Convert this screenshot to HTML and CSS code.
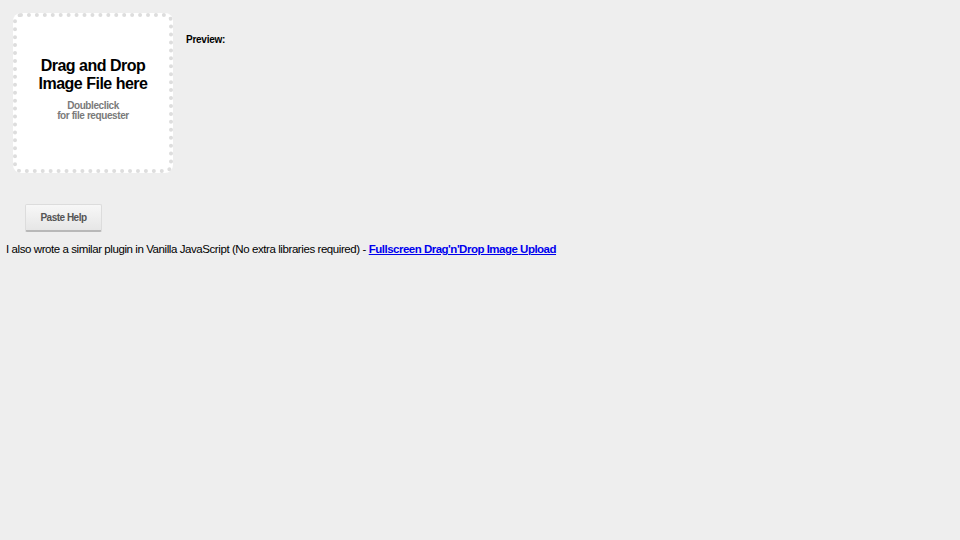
FILE: index.html
```html
<!DOCTYPE html>
<html>
<head>
<meta charset="utf-8">
<link rel="stylesheet" href="styles.css">
</head>
<body>
<div class="top">
  <div class="drop">
    <div class="drop-title">Drag and Drop<br>Image File here</div>
    <div class="drop-sub">Doubleclick<br>for file requester</div>
  </div>
  <div class="preview">Preview:</div>
</div>
<div class="actions">
  <button class="btn">Paste Help</button>
</div>
<p class="note">I also wrote a similar plugin in Vanilla JavaScript (No extra libraries required) - <a href="#">Fullscreen Drag'n'Drop Image Upload</a></p>
</body>
</html>
```
FILE: styles.css
```css
html, body {
  margin: 0;
  padding: 0;
  background: #eeeeee;
  font-family: "Liberation Sans", Arial, sans-serif;
  color: #000;
}
.top {
  display: flex;
  align-items: flex-start;
  padding: 13px 0 0 13px;
  gap: 13px;
}
.drop {
  box-sizing: border-box;
  width: 160px;
  height: 160px;
  background: #fff;
  border: 4px dotted #dddddd;
  border-radius: 8px;
  display: flex;
  flex-direction: column;
  align-items: center;
  justify-content: center;
  text-align: center;
  padding-bottom: 9px;
}
.drop-title {
  font-size: 16px;
  font-weight: bold;
  line-height: 18px;
  letter-spacing: -0.5px;
}
.drop-sub {
  margin-top: 8px;
  font-size: 10px;
  font-weight: bold;
  color: #7a7a7a;
  line-height: 10px;
  letter-spacing: -0.4px;
}
.preview {
  margin-top: 21px;
  font-size: 10px;
  font-weight: bold;
  letter-spacing: -0.25px;
}
.actions {
  padding: 31px 0 0 25px;
}
.btn {
  box-sizing: border-box;
  width: 77px;
  height: 28px;
  font-family: "Liberation Sans", Arial, sans-serif;
  font-size: 10px;
  font-weight: bold;
  color: #555;
  letter-spacing: -0.5px;
  background: linear-gradient(#f7f7f7, #e6e6e6);
  border: 1px solid #dcdcdc;
  border-bottom: 2px solid #b8b8b8;
  border-radius: 2px;
  padding: 0;
}
.note {
  margin: 10px 0 0 6px;
  font-size: 11.5px;
  line-height: 14px;
  letter-spacing: -0.42px;
}
.note a {
  color: #0000ee;
  font-weight: bold;
  letter-spacing: -0.5px;
}
```
